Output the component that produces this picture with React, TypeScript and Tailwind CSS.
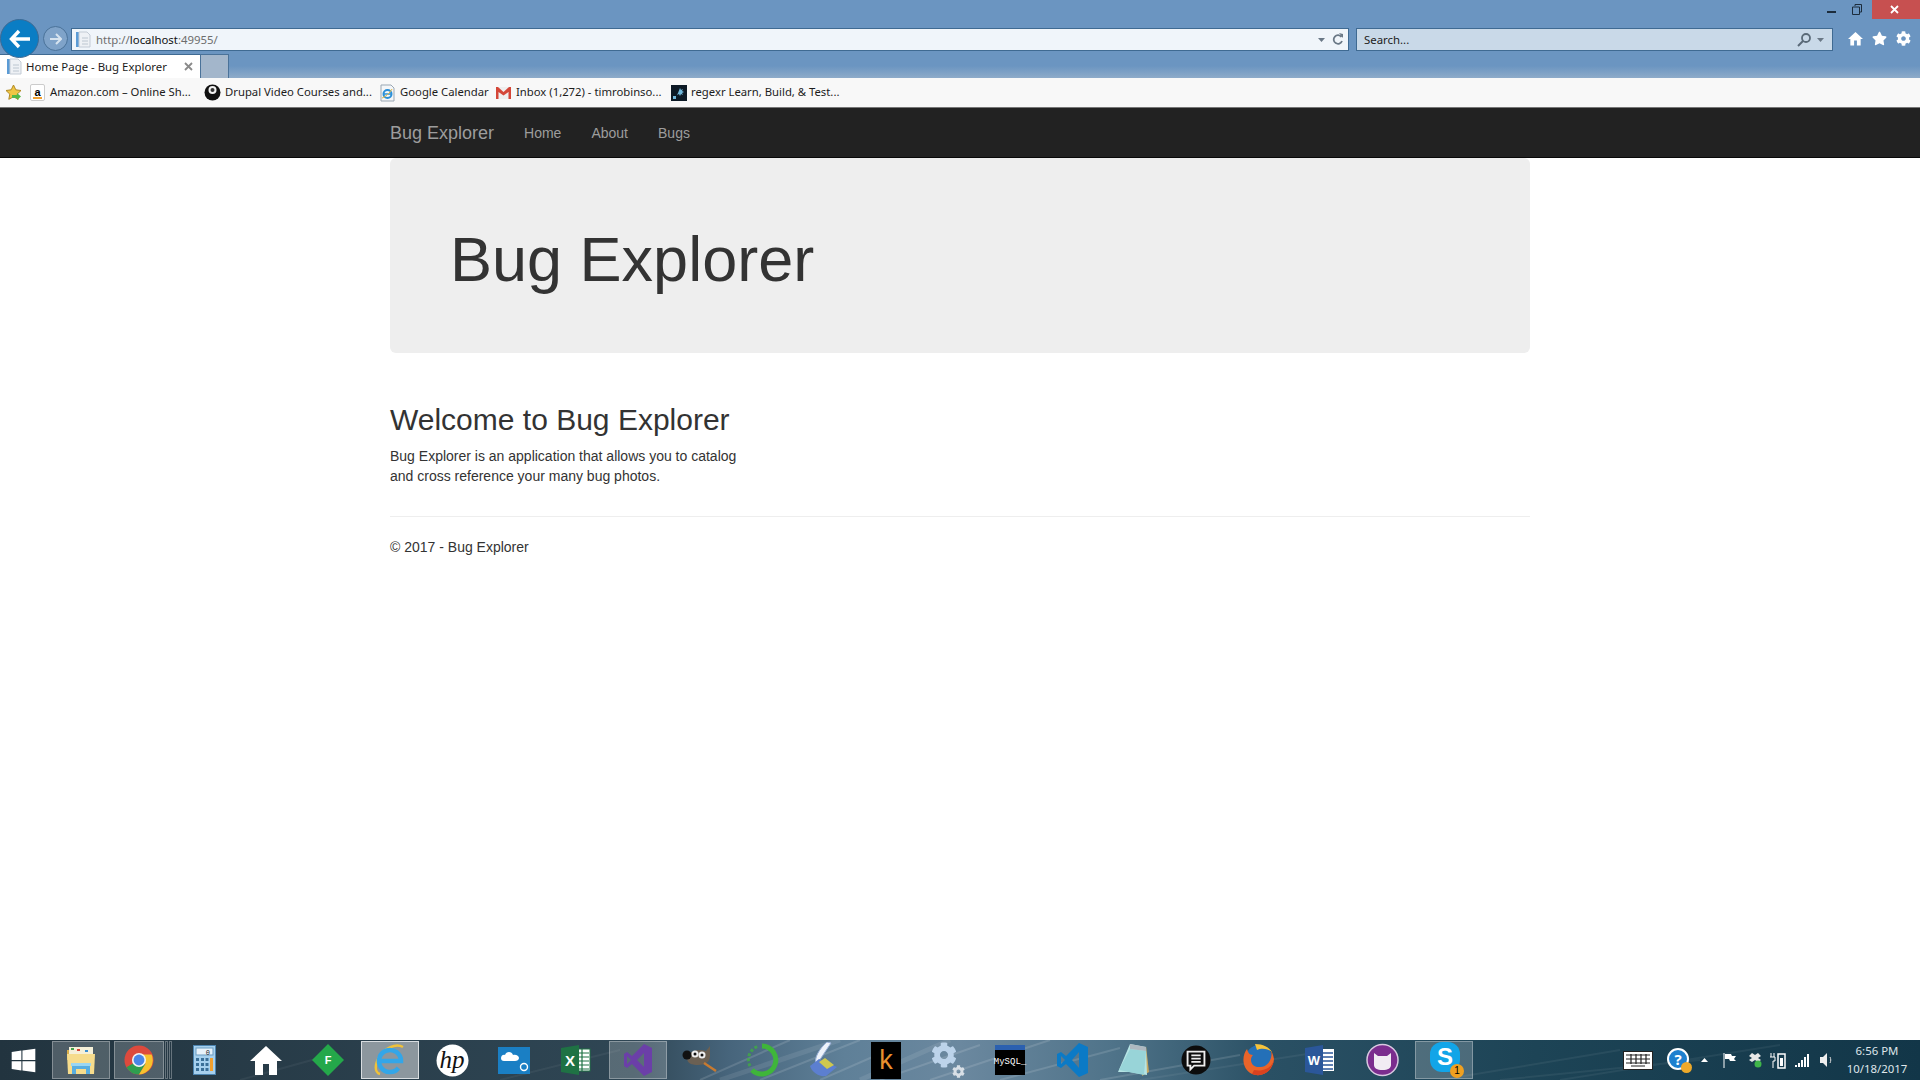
import React from "react";
import { FaStar, FaCog, FaWindows } from "react-icons/fa";

const PageIcon = () => (
  <svg width="17" height="17" viewBox="0 0 17 17">
    <rect x="1" y="1" width="3" height="15" fill="#5b9bd5" />
    <path d="M4 1h8l3 3v12H4z" fill="#eef1f5" stroke="#c3cbd5" />
    <path d="M7 7h6M7 10h6M7 13h6" stroke="#bcc6d0" />
  </svg>
);

const Caret = ({ c = "#6a7886" }: { c?: string }) => (
  <svg width="7" height="4" viewBox="0 0 7 4"><path d="M0 0h7L3.5 4z" fill={c} /></svg>
);

const HomeGlyph = ({ size }: { size: number }) => (
  <svg width={size} height={size} viewBox="0 0 32 32">
    <path d="M16 2L0 17h5v14h8V20h6v11h8V17h5z" fill="#fff" />
  </svg>
);

const SmallE = () => (
  <svg width="17" height="18" viewBox="0 0 17 18">
    <path d="M2 1h10l3 3v13H2z" fill="#f4f6f8" stroke="#9aa7b3" />
    <circle cx="8.5" cy="10" r="4" fill="none" stroke="#2a8fd8" strokeWidth="2" />
    <path d="M5 10h7" stroke="#2a8fd8" strokeWidth="1.5" />
    <path d="M3 14c3-1 8-5 10-9" fill="none" stroke="#e8b93a" />
  </svg>
);

function Fav({ icon, text, w }: { icon: React.ReactNode; text: string; w: number }) {
  return (
    <div className="flex items-center gap-[4px]" style={{ width: w }}>
      <span className="flex w-[17px] shrink-0 justify-center">{icon}</span>
      <span className="whitespace-nowrap">{text}</span>
    </div>
  );
}

function BrowserChrome() {
  return (
    <div className="bg-[#6b95c1] h-[107px] flex flex-col font-['Noto_Sans','Open_Sans',sans-serif] text-[#1c1c1c]">
      <div className="h-[28px] flex justify-end shrink-0">
        <div className="h-[19px] flex items-center">
          <svg width="9" height="9" viewBox="0 0 9 9" className="mr-[16px]"><rect x="0" y="6" width="9" height="2" fill="#1c2c3c" /></svg>
          <svg width="10" height="11" viewBox="0 0 10 11" className="mr-[10px]"><path d="M3 2V.5h6.5V8H8M.5 3h7v7.5h-7z" fill="none" stroke="#1c2c3c" /></svg>
          <div className="w-[48px] h-[19px] bg-[#c75050] flex items-center justify-center pr-[4px]">
            <svg width="9" height="9" viewBox="0 0 9 9"><path d="M1 1l7 7M8 1L1 8" stroke="#fff" strokeWidth="1.8" /></svg>
          </div>
        </div>
      </div>
      <div className="h-[26px] flex items-start shrink-0 relative">
        <div className="w-[39px] h-[39px] -mt-[9px] rounded-full bg-[#0a7dc4] border border-[#3e6a94] flex items-center justify-center z-10 shrink-0">
          <svg width="22" height="20" viewBox="0 0 22 20"><path d="M10 2L2.500 10l7.500 8M3 10h18" fill="none" stroke="#fff" strokeWidth="3.4" /></svg>
        </div>
        <div className="w-[25px] h-[25px] ml-[4px] -mt-[2px] rounded-full border border-[#4a7299] bg-[#7fa3c9] flex items-center justify-center shrink-0">
          <svg width="13" height="12" viewBox="0 0 13 12"><path d="M7 1l5 5-5 5M12 6H1" fill="none" stroke="#d6e3ef" strokeWidth="2" /></svg>
        </div>
        <div className="w-[1278px] h-[23px] ml-[3px] bg-[#f0f5fa] border border-[#3f6a92] flex items-center shrink-0 text-[11.4px]">
          <span className="ml-[3px] mr-[4px] flex"><PageIcon /></span>
          <span className="text-[#6d6d6d]">http://</span><span className="text-[#111]">localhost</span><span className="text-[#6d6d6d]">:49955/</span>
          <span className="ml-auto mr-[7px] flex"><Caret /></span>
          <svg width="12" height="13" viewBox="0 0 12 13" className="mr-[4px]"><path d="M9.500 4A4.300 4.300 0 1 0 10 8" fill="none" stroke="#6a7886" strokeWidth="1.800" /><path d="M7 0l4 1v4z" fill="#6a7886" /></svg>
        </div>
        <div className="w-[477px] h-[23px] ml-[7px] bg-[#c9d9e8] border border-[#3f6a92] flex items-center shrink-0 text-[11.4px] pl-[7px]">
          <span>Search...</span>
          <svg width="15" height="15" viewBox="0 0 15 15" className="ml-auto mr-[5px]"><circle cx="9" cy="6" r="4" fill="none" stroke="#5a6a78" strokeWidth="1.800" /><path d="M6 9l-5 5" stroke="#5a6a78" strokeWidth="2" /></svg>
          <span className="mr-[8px] flex"><Caret /></span>
        </div>
        <div className="flex items-center text-white ml-[15px] gap-[9px] h-[21px]">
          <HomeGlyph size={15} />
          <FaStar size={15} />
          <FaCog size={15} />
        </div>
      </div>
      <div className="h-[24px] flex items-end shrink-0 bg-gradient-to-b from-[#6b95c1] from-50% to-[#8eabc9]">
        <div className="w-[200px] h-[24px] bg-white flex items-center text-[11.4px] border-t border-[#3f6a92]">
          <span className="ml-[6px] mr-[3px] flex"><PageIcon /></span>
          <span>Home Page - Bug Explorer</span>
          <svg width="9" height="9" viewBox="0 0 9 9" className="ml-auto mr-[7px]"><path d="M1 1l7 7M8 1L1 8" stroke="#8a8a8a" strokeWidth="1.800" /></svg>
        </div>
        <div className="w-[29px] h-[24px] bg-[#a3b6cb] border border-[#4a7299] border-b-0" />
      </div>
      <div className="h-[29px] flex items-center bg-[#f8f8f8] shrink-0 text-[11.3px] overflow-hidden">
        <svg width="17" height="17" viewBox="0 0 17 17" className="ml-[5px] mr-[7px] shrink-0">
          <path d="M8.500 1l2.300 4.800 5.200.7-3.800 3.600 1 5.200-4.700-2.500-4.700 2.500 1-5.200L1 6.500l5.200-.7z" fill="#f1c644" stroke="#b08a24" />
          <path d="M7 11h5V9l4 3.500-4 3.500v-2H7z" fill="#55b848" />
        </svg>
        <Fav w={175} text="Amazon.com – Online Sh..." icon={
          <span className="w-[15px] h-[17px] bg-white border border-[#ccc] rounded-[2px] flex flex-col items-center justify-center text-[11px] font-bold font-['Liberation_Sans',sans-serif] text-black leading-[10px]">a<span className="w-[9px] h-[2px] bg-[#f0a030]" /></span>
        } />
        <Fav w={175} text="Drupal Video Courses and..." icon={
          <svg width="17" height="17" viewBox="0 0 17 17"><circle cx="8.500" cy="8.500" r="8" fill="#111" /><circle cx="8.500" cy="6" r="4" fill="#f2f2f2" /><circle cx="8.500" cy="6" r="2" fill="#333" /></svg>
        } />
        <Fav w={116} text="Google Calendar" icon={<SmallE />} />
        <Fav w={175} text="Inbox (1,272) - timrobinso..." icon={
          <svg width="15" height="12" viewBox="0 0 15 12"><rect width="15" height="12" fill="#eee" /><path d="M0 12V0h2l5.500 5L13 0h2v12h-2.500V5L7.500 8.500 2.500 5v7z" fill="#d44638" /></svg>
        } />
        <Fav w={168} text="regexr Learn, Build, & Test..." icon={
          <svg width="16" height="16" viewBox="0 0 16 16"><rect width="16" height="16" fill="#0d1a26" /><path d="M9 3l1 2 2-1-1 2 2 1-2 1 1 2-2-1-1 2-1-2-2 1 1-2" fill="#70b8dc" /><rect x="2" y="11" width="3" height="3" fill="#70b8dc" /></svg>
        } />
      </div>
    </div>
  );
}

function Page() {
  return (
    <div className="flex-1 bg-white font-['Liberation_Sans',sans-serif] text-[14px] leading-[20px] text-[#333] min-h-0">
      <nav className="h-[51px] bg-[#222] border-t border-[#777] border-b border-b-[#080808]">
        <div className="w-[1140px] mx-auto flex items-center h-[49px] pt-px text-[#9d9d9d]">
          <span className="text-[18px] mr-[30px]">Bug Explorer</span>
          <span className="mr-[30px]">Home</span>
          <span className="mr-[30px]">About</span>
          <span>Bugs</span>
        </div>
      </nav>
      <div className="w-[1140px] mx-auto">
        <div className="bg-[#eee] rounded-[6px] h-[195px] pl-[60px] pt-[47px]">
          <h1 className="text-[63px] leading-[69px] mt-[20px] font-normal">Bug Explorer</h1>
        </div>
        <h2 className="text-[30px] leading-[33px] mt-[50px] mb-[10px] font-normal">Welcome to Bug Explorer</h2>
        <p className="w-[360px]">Bug Explorer is an application that allows you to catalog and cross reference your many bug photos.</p>
        <div className="h-px bg-[#eee] mt-[30px]" />
        <p className="mt-[20px]">© 2017 - Bug Explorer</p>
      </div>
    </div>
  );
}

const Chrome = () => (
  <svg width="30" height="30" viewBox="0 0 32 32">
    <circle cx="16" cy="16" r="15.500" fill="#dd4a3d" />
    <path d="M16 16L2.600 23.800A15.500 15.500 0 0 0 16 31.500L23 20z" fill="#2f9e4f" />
    <path d="M16 10h13.500A15.500 15.500 0 0 1 16 31.500L23 20z" fill="#f6c22e" />
    <circle cx="16" cy="16" r="7.500" fill="#f4f4f4" />
    <circle cx="16" cy="16" r="5.800" fill="#4a86e8" />
  </svg>
);

const Explorer = () => (
  <svg width="32" height="32" viewBox="0 0 32 32">
    <path d="M2 6h10l2 2h14v8H2z" fill="#d9ae4a" />
    <rect x="4" y="3" width="24" height="8" fill="#f5f0d8" />
    <rect x="6" y="4" width="3" height="2" fill="#43a047" />
    <rect x="12" y="5" width="3" height="2" fill="#d84535" />
    <rect x="20" y="6" width="3" height="2" fill="#3d8fd0" />
    <path d="M2 10h28l-1 20H3z" fill="#f6dc8c" />
    <path d="M7 30V22h18v8h-4v-5h-10v5z" fill="#58aee0" />
    <path d="M6 19h20v3H6z" fill="#9ad6f2" />
  </svg>
);

const Calc = () => (
  <svg width="23" height="30" viewBox="0 0 23 30">
    <rect x=".5" y=".5" width="22" height="29" fill="#a6d0ee" stroke="#4c84b0" />
    <rect x="3" y="3" width="17" height="7" fill="#e8f2fa" stroke="#6a9bc0" />
    <text x="17" y="9.500" fontSize="7" textAnchor="end" fill="#222" fontFamily="Liberation Mono, monospace">0</text>
    <g fill="#3a6f98">
      <rect x="3" y="13" width="3" height="3" /><rect x="8" y="13" width="3" height="3" /><rect x="12.500" y="13" width="3" height="3" />
      <rect x="3" y="18" width="3" height="3" /><rect x="8" y="18" width="3" height="3" /><rect x="12.500" y="18" width="3" height="3" />
      <rect x="3" y="23" width="3" height="3" /><rect x="8" y="23" width="3" height="3" /><rect x="12.500" y="23" width="3" height="3" />
    </g>
    <rect x="17" y="13" width="3" height="13" fill="#f0a030" />
  </svg>
);

const Diamond = () => (
  <svg width="32" height="32" viewBox="0 0 32 32">
    <path d="M16 0l16 16-16 16L0 16z" fill="#24a84a" />
    <text x="16" y="20" fontSize="11" fontWeight="700" textAnchor="middle" fill="#fff" fontFamily="Liberation Sans, sans-serif">F</text>
  </svg>
);

const IE = () => (
  <svg width="32" height="32" viewBox="0 0 32 32">
    <path d="M29 3C22 -1 10 4 5 13C1 20 0 28 6 30" fill="none" stroke="#f0c238" strokeWidth="2.400" />
    <path d="M6 17H27A11 11 0 1 0 24.500 24" fill="none" stroke="#33a6e8" strokeWidth="4.500" />
  </svg>
);

const HP = () => (
  <svg width="33" height="33" viewBox="0 0 33 33">
    <circle cx="16.500" cy="16.500" r="16" fill="#fff" />
    <text x="16" y="24" fontSize="25" fontWeight="400" fontStyle="italic" textAnchor="middle" fill="#111" fontFamily="Liberation Serif, serif">hp</text>
  </svg>
);

const OneDrive = () => (
  <svg width="32" height="27" viewBox="0 0 32 27">
    <rect width="32" height="27" fill="#1a7fc4" />
    <path d="M3 11c0-3 3-4 4-3 1-4 7-4 8 0 3-1 6 1 6 3 0 2-2 3-4 3H6c-2 0-3-1-3-3z" fill="#fff" />
    <circle cx="26" cy="20" r="3.500" fill="none" stroke="#fff" strokeWidth="1.400" />
  </svg>
);

const Excel = () => (
  <svg width="30" height="30" viewBox="0 0 30 30">
    <rect x="14" y="4" width="15" height="22" fill="#fff" stroke="#1f7244" />
    <path d="M16 8h12M16 12h12M16 16h12M16 20h12M16 24h12M21 4v22" stroke="#1f7244" strokeWidth="1.200" />
    <path d="M0 3l18-3v30L0 27z" fill="#1f7244" />
    <text x="9" y="21" fontSize="15" fontWeight="700" textAnchor="middle" fill="#fff" fontFamily="Liberation Sans, sans-serif">X</text>
  </svg>
);

const VS = () => (
  <svg width="30" height="34" viewBox="0 0 30 34">
    <path d="M21 1l8 4v24l-8 4L9 21l-5 4-3-2V11l3-2 5 4zM21 10l-7 7 7 7zM4 13v8l4-4z" fill="#6b3fa8" />
  </svg>
);

const Gimp = () => (
  <svg width="36" height="28" viewBox="0 0 36 28">
    <path d="M6 9c4-5 12-6 18-4l4-5v10c0 6-5 9-12 9S3 17 6 9z" fill="#6b6053" />
    <circle cx="5" cy="9" r="4.500" fill="#111" />
    <circle cx="13" cy="8" r="3.500" fill="#eee" /><circle cx="20" cy="9" r="3.500" fill="#eee" />
    <circle cx="13" cy="8" r="1.500" fill="#111" /><circle cx="20" cy="9" r="1.500" fill="#111" />
    <path d="M22 17l12 8" stroke="#c87a30" strokeWidth="2.500" />
  </svg>
);

const Ring = () => (
  <svg width="34" height="36" viewBox="0 0 34 36">
    <path d="M17 4A14 14 0 1 1 7 28" fill="none" stroke="#3fb53a" strokeWidth="5" />
    <path d="M5 24A14 14 0 0 1 14 4" fill="none" stroke="#3fb53a" strokeWidth="3" strokeDasharray="3 2" strokeOpacity=".7" />
  </svg>
);

const Scanner = () => (
  <svg width="30" height="36" viewBox="0 0 30 36">
    <path d="M18 0l4 1-12 18-3 3c-2-6 3-15 11-22z" fill="#eef3fa" stroke="#9ab0d8" />
    <path d="M1 24l9-7 18 8-11 9c-8 1-14-4-16-10z" fill="#5c7fd0" />
    <path d="M10 20l6-4 9 7-7 4z" fill="#cfc84e" />
  </svg>
);

const Kindle = () => (
  <div className="w-[30px] h-[37px] bg-black flex items-center justify-center text-[#e8912d] text-[27px] leading-none font-['Liberation_Sans',sans-serif]">k</div>
);

const Gears = () => (
  <div className="relative w-[34px] h-[36px]">
    <FaCog size={26} className="absolute left-0 top-0 text-[#bcd3ea]" />
    <FaCog size={13} className="absolute right-0 bottom-0 text-[#d8dfe6]" />
  </div>
);

const MySQL = () => (
  <div className="w-[30px] h-[30px] bg-black border-t-[5px] border-[#2b60b0] flex items-center justify-center text-white text-[9px] leading-none font-['Liberation_Mono',monospace]">MySQL_</div>
);

const VSCode = () => (
  <svg width="31" height="36" viewBox="0 0 31 36">
    <path d="M22 1l9 4v26l-9 4L9 22l-5 4-4-2V12l4-2 5 4zM22 10l-7 8 7 8zM4 14v8l4-4z" fill="#0b7ac6" />
  </svg>
);

const Notepad = () => (
  <svg width="32" height="34" viewBox="0 0 32 34">
    <path d="M28 3l3 26-7 4z" fill="#c8a860" />
    <path d="M12 1l16 3 1 28-18-3-11 0z" fill="#b6e4e4" />
    <path d="M12 6l16 2-2 24L1 27z" fill="#98d4d8" />
    <path d="M12 1l16 3 0 4-16-2z" fill="#aeb8c0" />
  </svg>
);

const Chat = () => (
  <svg width="30" height="30" viewBox="0 0 32 32">
    <circle cx="16" cy="16" r="15.500" fill="#0c0c0c" />
    <path d="M7 7h18v15H14l-4 4v-4H7z" fill="none" stroke="#eee" strokeWidth="2" />
    <path d="M11 11h10M11 14.500h10M11 18h10" stroke="#eee" strokeWidth="1.800" />
  </svg>
);

const Firefox = () => (
  <svg width="32" height="32" viewBox="0 0 32 32">
    <circle cx="17" cy="14" r="13" fill="#2470b8" />
    <path d="M13 0C21 0 27 3 30 8C25 4 19 4 15 6z" fill="#f6c33b" />
    <path d="M5 5C0 11-1 24 10 30C20 34 31 27 32 15C31 10 30 8 29 7C31 14 26 24 17 23C9 23 7 15 11 11C7 11 6 8 5 5z" fill="#e9642a" />
    <path d="M10 30C20 34 31 27 32 15C31 23 22 28 12 26z" fill="#d9421f" />
  </svg>
);

const Word = () => (
  <svg width="30" height="30" viewBox="0 0 30 30">
    <rect x="16" y="4" width="13" height="22" fill="#fff" />
    <path d="M18 8h10M18 12h10M18 16h10M18 20h10M18 24h10" stroke="#2b579a" strokeWidth="1.300" />
    <path d="M0 3l18-3v30L0 27z" fill="#2b579a" />
    <text x="9" y="20" fontSize="13" fontWeight="700" textAnchor="middle" fill="#fff" fontFamily="Liberation Sans, sans-serif">W</text>
  </svg>
);

const Cat = () => (
  <svg width="33" height="38" viewBox="0 0 33 38">
    <circle cx="16.500" cy="19" r="15.500" fill="#7b2d8e" stroke="#d8c8e0" strokeWidth="1.500" />
    <path d="M8 12l4 3h9l4-3v12c0 3-3 5-8.500 5S8 27 8 24z" fill="#f1ecf3" />
  </svg>
);

const Skype = () => (
  <div className="relative w-[34px] h-[36px] ml-[6px]">
    <div className="w-[30px] h-[30px] bg-[#12a5e8] rounded-[12px] flex items-center justify-center text-white text-[24px] font-bold leading-none font-['Liberation_Sans',sans-serif]">S</div>
    <div className="absolute right-0 bottom-0 w-[14px] h-[14px] rounded-full bg-[#f0a020] text-[10px] text-black flex items-center justify-center leading-none font-['Liberation_Sans',sans-serif]">1</div>
  </div>
);

const Tile = ({ children, active }: { children: React.ReactNode; active?: boolean }) => (
  <div className={`w-[58px] h-[38px] flex items-center justify-center border ${active ? "bg-[#8c979e] border-[#d8dde0]" : "bg-white/20 border-white/30"}`}>{children}</div>
);

const Slot = ({ children }: { children: React.ReactNode }) => (
  <div className="w-[62px] h-[40px] flex items-center justify-center shrink-0">{children}</div>
);

function Taskbar() {
  return (
    <div className="relative h-[40px] shrink-0 flex items-center overflow-hidden bg-[linear-gradient(90deg,#22343f_0%,#2a3f4c_20%,#2f4654_33%,#47657c_38%,#5f8098_44%,#6b889f_50%,#4f7389_58%,#2a5064_66%,#1d4456_80%,#123648_100%)] font-['Noto_Sans',sans-serif]">
      <svg className="absolute inset-0" width="1920" height="40" viewBox="0 0 1920 40">
        <g fill="none" stroke="#ffffff" strokeOpacity=".13" strokeWidth="2">
          <path d="M700 40L790 0M760 40L860 0M820 40L900 5M880 40L980 5M930 40L1050 0M1000 40L1120 8M1100 40L1240 15" />
          <path d="M720 40L840 0M860 40L950 0" strokeWidth="5" strokeOpacity=".09" />
          <path d="M1140 40L1320 12M1440 40L1620 10M1500 40L1700 20M1560 40L1780 5" strokeOpacity=".06" />
          <path d="M240 40L330 15M500 40L620 10" strokeOpacity=".05" />
        </g>
      </svg>
      <div className="relative flex items-center h-[40px]">
        <div className="w-[52px] flex items-center justify-center pr-[5px]"><FaWindows size={27} className="text-white" /></div>
        <Tile><Explorer /></Tile>
        <div className="w-[4px]" />
        <div className="w-[50px] h-[38px] flex items-center justify-center border border-white/30 bg-white/20"><Chrome /></div>
        <div className="w-[3px] h-[38px] ml-[1px] border border-white/30" />
        <div className="w-[3px] h-[38px] ml-[1px] border border-white/30" />
        <div className="w-px" />
        <Slot><Calc /></Slot>
        <Slot><HomeGlyph size={32} /></Slot>
        <Slot><Diamond /></Slot>
        <Slot><Tile active><IE /></Tile></Slot>
        <Slot><HP /></Slot>
        <Slot><OneDrive /></Slot>
        <Slot><Excel /></Slot>
        <Slot><Tile><VS /></Tile></Slot>
        <Slot><Gimp /></Slot>
        <Slot><Ring /></Slot>
        <Slot><Scanner /></Slot>
        <Slot><Kindle /></Slot>
        <Slot><Gears /></Slot>
        <Slot><MySQL /></Slot>
        <Slot><VSCode /></Slot>
        <Slot><Notepad /></Slot>
        <Slot><Chat /></Slot>
        <Slot><Firefox /></Slot>
        <Slot><Word /></Slot>
        <Slot><Cat /></Slot>
        <Slot><Tile><Skype /></Tile></Slot>
      </div>
      <div className="relative ml-auto flex items-center h-[40px] text-white">
        <svg width="30" height="19" viewBox="0 0 30 19" className="mr-[14px]">
          <rect x=".5" y=".5" width="29" height="18" fill="#fff" stroke="#222" />
          <path d="M3 4h24M3 8h24M3 12h24M8 3v10M13 3v10M18 3v10M23 3v10M8 15h14" stroke="#222" strokeWidth="1.200" />
        </svg>
        <div className="relative w-[22px] h-[28px] mr-[12px]">
          <div className="w-[22px] h-[22px] mt-[2px] rounded-full bg-[#1d80cf] border-2 border-white text-white text-[15px] font-bold flex items-center justify-center leading-none">?</div>
          <div className="absolute right-[-3px] bottom-[1px] w-[11px] h-[11px] rounded-full bg-[#eda92a]" />
        </div>
        <svg width="7" height="4" viewBox="0 0 7 4" className="mr-[15px]"><path d="M0 4h7L3.500 0z" fill="#fff" /></svg>
        <svg width="14" height="15" viewBox="0 0 14 15" className="mr-[11px]"><path d="M1 0v15" stroke="#fff" /><path d="M2 1h6l1 2h4l-2 3 2 2H7L6 6H2z" fill="#fff" /></svg>
        <svg width="15" height="16" viewBox="0 0 15 16" className="mr-[7px]"><path d="M4 1l3 2 3-2 3 3-3 2 3 2-3 2-3-2-3 2-3-2 3-2-3-2z" fill="#e8e8e8" /><circle cx="10" cy="12" r="3.500" fill="#3fb54a" /></svg>
        <svg width="16" height="17" viewBox="0 0 16 17" className="mr-[9px]"><path d="M1 1v4M4 1v4M0 5h5v4H3v7" stroke="#fff" fill="none" /><rect x="8" y="2" width="7" height="14" fill="none" stroke="#fff" strokeWidth="1.500" /><rect x="10" y="6" width="3" height="8" fill="#fff" /></svg>
        <svg width="14" height="13" viewBox="0 0 14 13" className="mr-[11px]"><path d="M0 11h2v2H0zM3 9h2v4H3zM6 6h2v7H6zM9 3h2v10H9zM12 0h2v13h-2z" fill="#fff" /></svg>
        <svg width="13" height="14" viewBox="0 0 13 14" className="mr-[8px]"><path d="M0 4h3l4-4v14l-4-4H0z" fill="#eee" /><path d="M10 4c1 2 1 4 0 6" stroke="#ddd" fill="none" /></svg>
        <div className="w-[72px] mr-[7px] text-center text-[11.4px] leading-[18px] text-[#dfe6ea]">
          <div>6:56 PM</div>
          <div>10/18/2017</div>
        </div>
      </div>
    </div>
  );
}

export default function App() {
  return (
    <div className="w-[1920px] h-[1080px] flex flex-col overflow-hidden bg-white">
      <BrowserChrome />
      <Page />
      <Taskbar />
    </div>
  );
}
